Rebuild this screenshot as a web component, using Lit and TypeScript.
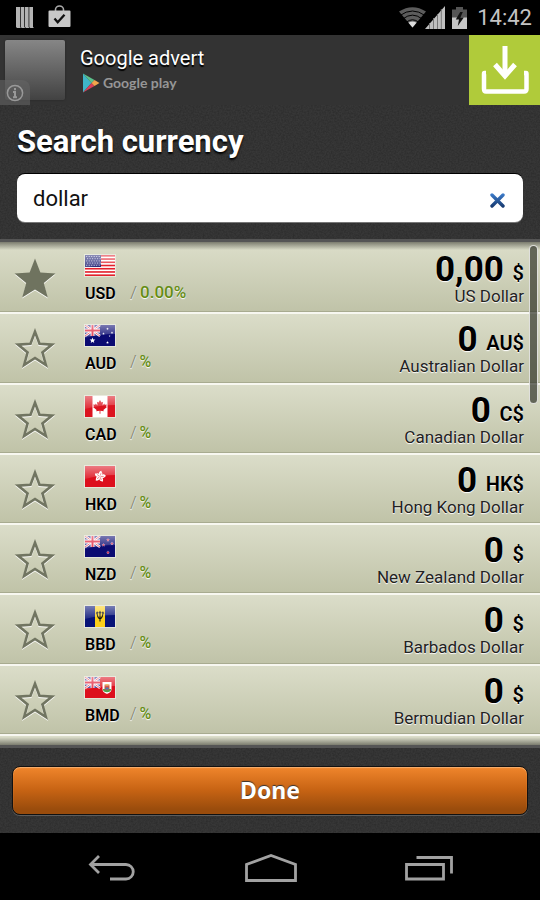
import { LitElement, html, svg, css } from "lit";
import { customElement, property } from "lit/decorators.js";

interface Currency {
  code: string;
  name: string;
  symbol: string;
  amount: string;
  change: string;
  favourite?: boolean;
}

const currencies: Currency[] = [
  { code: "USD", name: "US Dollar", symbol: "$", amount: "0,00", change: "0.00%", favourite: true },
  { code: "AUD", name: "Australian Dollar", symbol: "AU$", amount: "0", change: "%" },
  { code: "CAD", name: "Canadian Dollar", symbol: "C$", amount: "0", change: "%" },
  { code: "HKD", name: "Hong Kong Dollar", symbol: "HK$", amount: "0", change: "%" },
  { code: "NZD", name: "New Zealand Dollar", symbol: "$", amount: "0", change: "%" },
  { code: "BBD", name: "Barbados Dollar", symbol: "$", amount: "0", change: "%" },
  { code: "BMD", name: "Bermudian Dollar", symbol: "$", amount: "0", change: "%" },
];

const unionJack = (ground: string) => svg`
  <rect width="15" height="11" fill=${ground}/>
  <path d="M0 0L15 11M15 0L0 11" stroke="#fff" stroke-width="2.4"/>
  <path d="M0 0L15 11M15 0L0 11" stroke="#e2354a" stroke-width="0.9"/>
  <path d="M7.5 0V11M0 5.5H15" stroke="#fff" stroke-width="3.8"/>
  <path d="M7.5 0V11M0 5.5H15" stroke="#e0203a" stroke-width="2"/>`;

const spark = (x: number, y: number, r: number, fill: string) => {
  const pts: string[] = [];
  for (let i = 0; i < 10; i++) {
    const a = (Math.PI * i) / 5 - Math.PI / 2;
    const d = i % 2 ? r * 0.45 : r;
    pts.push(`${(x + Math.cos(a) * d).toFixed(2)},${(y + Math.sin(a) * d).toFixed(2)}`);
  }
  return svg`<polygon points=${pts.join(" ")} fill=${fill}/>`;
};

const flags: Record<string, () => unknown> = {
  USD: () => svg`
    <rect width="30" height="21" fill="#fff"/>
    ${[0, 1, 2, 3, 4, 5, 6].map((i) => svg`<rect y=${i * 3.23} width="30" height="1.62" fill="#e3202c"/>`)}
    <rect width="16" height="12" fill="#2d2f7c"/>
    ${[0, 1, 2, 3, 4].map((r) =>
      [0, 1, 2, 3, 4, 5].map(
        (c) => svg`<rect x=${1.2 + c * 2.5 + (r % 2) * 0.9} y=${1 + r * 2.2} width="1" height="1" fill="#c3c5e4"/>`,
      ),
    )}`,
  AUD: () => svg`
    <rect width="30" height="21" fill="#0b0b72"/>${unionJack("#30308c")}
    ${spark(7.5, 15.5, 3, "#fff")}${spark(22.5, 3.8, 1.3, "#fff")}${spark(18.5, 8.6, 1.3, "#fff")}
    ${spark(27, 7.6, 1.3, "#fff")}${spark(24.6, 11, 0.9, "#fff")}${spark(22.5, 17.5, 1.4, "#fff")}`,
  CAD: () => svg`
    <rect width="30" height="21" fill="#fff"/>
    <path d="M0 0H7.5V21H0zM22.5 0H30V21H22.500z" fill="#dc1420"/>
    <path d="M15 4l1.500 2.600 1.500-.8-.5 3.700 1.900-1.900.4 1.100 2-.3-.7 2 .9.600-3.600 2.900.4 1.300-3.400-.4v2.900h-.8v-2.900l-3.400.4.4-1.300L8 11l.9-.6-.7-2 2 .3.4-1.100 1.900 1.900-.5-3.700 1.500.8z" fill="#dc1420"/>`,
  HKD: () => svg`
    <rect width="30" height="21" fill="#dd0f1d"/>
    ${[0, 72, 144, 216, 288].map(
      (a) => svg`<path transform="rotate(${a + 12} 15 10.500)" d="M15 10.500c-2.600-1.600-2.300-5 .3-6 -.4 1.200 2 1.700 1.500 3.400 -.3 1.200-1.400 1.600-1.800 2.600z" fill="#fff"/>
        <path transform="rotate(${a + 12} 15 10.500)" d="M15 9.500l.3-2.700" stroke="#dd0f1d" stroke-width="0.5"/>`,
    )}`,
  NZD: () => svg`
    <rect width="30" height="21" fill="#0b0b72"/>${unionJack("#30308c")}
    ${[[23, 4], [18.5, 9], [27, 7.6], [23, 16.5]].map(
      ([x, y]) => svg`${spark(x, y, 2, "#b9b9dc")}${spark(x, y, 1.4, "#e02040")}`,
    )}`,
  BBD: () => svg`
    <rect width="30" height="21" fill="#071377"/>
    <rect x="10" width="10" height="21" fill="#fbcf1c"/>
    <path d="M15 6V15.500M11.800 6.500C12.600 9 12.400 12.500 15 12.500C17.600 12.500 17.400 9 18.200 6.500M11.200 7.500l1-1.400 1 1M16.900 7.100l1-1 1 1.400M14 7.200l1-1.700 1 1.700" fill="none" stroke="#111" stroke-width="1.1"/>`,
  BMD: () => svg`
    <rect width="30" height="21" fill="#dd0f1d"/>${unionJack("#3a3a94")}
    <path d="M17.500 5H26.500V12C26.500 15 24 16 22 17C20 16 17.500 15 17.500 12z" fill="#fff"/>
    <path d="M18 13C19 16 25 16 26 13V12H18z" fill="#4da34f"/>
    <path d="M19.500 7.500h5v4.500l-2.500 1.500-2.500-1.500z" fill="#d8503c"/>
    <path d="M20.500 10.500h3v2h-3z" fill="#3f7fc0"/><path d="M20.500 7h3v1.500h-3z" fill="#e0b040"/>`,
};

const grain = css`url("data:image/svg+xml,%3Csvg xmlns='http://www.w3.org/2000/svg' width='90' height='90'%3E%3Cfilter id='n'%3E%3CfeTurbulence type='fractalNoise' baseFrequency='.6' numOctaves='2' stitchTiles='stitch'/%3E%3CfeColorMatrix values='0 0 0 0 0 0 0 0 0 0 0 0 0 0 0 .9 0 0 0 -.28'/%3E%3C/filter%3E%3Crect width='90' height='90' filter='url(%23n)' opacity='.4'/%3E%3C/svg%3E")`;

@customElement("currency-row")
export class CurrencyRow extends LitElement {
  @property({ attribute: false }) item!: Currency;

  static styles = css`
    :host {
      display: flex;
      align-items: flex-start;
      box-sizing: border-box;
      height: 100%;
      padding: 11px 16px 0 14px;
      color: #000;
      text-shadow: 0 1px 1px #fff;
    }
    .star {
      display: block;
      width: 42px;
      height: 42px;
      margin: 3px 29px 0 0;
      padding: 0;
      border: 0;
      background: none;
    }
    .star svg {
      display: block;
      filter: drop-shadow(0 1px 0 rgba(255, 255, 255, 0.9));
    }
    .ident {
      flex: 1;
    }
    .flag {
      display: block;
      width: 30px;
      height: 21px;
      box-shadow: 0 0 0 1px rgba(255, 255, 255, 0.45);
    }
    .line {
      display: flex;
      align-items: flex-end;
      margin-top: 6px;
    }
    .code {
      width: 45px;
      font-size: 16px;
      line-height: 20px;
      font-weight: 600;
    }
    .change {
      padding-bottom: 2px;
      font-size: 16px;
      line-height: 20px;
      font-weight: 500;
      color: #648c14;
    }
    .known {
      font-size: 17px;
    }
    .slash {
      margin-right: 3px;
      font-weight: 400;
      color: #8b8e78;
    }
    .value {
      text-align: right;
    }
    .amount {
      display: block;
      font-size: 35px;
      line-height: 30px;
      font-weight: 700;
    }
    .symbol {
      font-size: 20px;
      line-height: 20px;
      font-weight: 600;
      vertical-align: 1px;
    }
    .name {
      display: block;
      font-size: 17px;
      line-height: 22px;
      color: #222;
    }
  `;

  render() {
    const c = this.item;
    return html`
      <button class="star" aria-label="Favourite ${c.code}" aria-pressed=${c.favourite ? "true" : "false"}>
        <svg width="42" height="42" viewBox="0 0 42 42">
          ${c.favourite
            ? svg`<path d="M21 .5L26.400 14.600L41.500 15.500L29.800 24.900L33.800 39.500L21 31.500L8.200 39.500L12.200 24.900L.5 15.500L15.600 14.600z" fill="#6f735f"/>`
            : svg`<path d="M21 3.700L25.500 15.800L38 16.600L28.400 24.400L31.900 37L21 30L10.100 37L13.600 24.400L4 16.600L16.500 15.800z" fill="none" stroke="#717561" stroke-width="2.6"/>`}
        </svg>
      </button>
      <div class="ident">
        <svg class="flag" viewBox="0 0 30 21" preserveAspectRatio="none" aria-hidden="true">
          <defs>
            <linearGradient id="gloss" x2="0" y2="1">
              <stop offset="0" stop-color="#fff" stop-opacity="0.45" />
              <stop offset="1" stop-color="#fff" stop-opacity="0.1" />
            </linearGradient>
          </defs>
          ${flags[c.code]()}
          <path d="M0 0H30V9Q15 9 0 13z" fill="url(#gloss)" />
        </svg>
        <div class="line">
          <span class="code">${c.code}</span>
          <span class="change ${c.change.length > 1 ? "known" : ""}"><span class="slash">/</span>${c.change}</span>
        </div>
      </div>
      <div class="value">
        <span class="amount">${c.amount} <span class="symbol">${c.symbol}</span></span>
        <span class="name">${c.name}</span>
      </div>
    `;
  }
}

@customElement("app-root")
export class AppRoot extends LitElement {
  static styles = css`
    :host {
      display: flex;
      flex-direction: column;
      min-height: 100vh;
      background: #000;
      color: #fff;
      font-family: Roboto, "Noto Sans", sans-serif;
    }
    svg {
      display: block;
    }
    .status {
      display: flex;
      align-items: center;
      height: 35px;
      padding: 0 8px 0 16px;
      gap: 7px;
    }
    .status .bag {
      margin: 0 auto 4px 7px;
    }
    .status .wifi {
      margin-right: -8px;
    }
    .clock {
      margin-left: 3px;
      font-size: 22px;
      line-height: 35px;
      color: #c4c4c4;
    }
    .ad {
      display: flex;
      height: 70px;
      background: #333;
    }
    .thumb {
      position: relative;
      width: 60px;
      height: 60px;
      margin: 5px 15px 5px 5px;
      border-radius: 2px;
      background: linear-gradient(#868686, #424242);
      box-shadow: 0 0 2px #222;
    }
    .info {
      position: absolute;
      left: -5px;
      bottom: -5px;
      display: grid;
      place-items: center;
      width: 30px;
      height: 25px;
      padding: 0;
      border: 0;
      border-radius: 0 8px 0 0;
      background: rgba(100, 100, 100, 0.6);
    }
    .copy {
      flex: 1;
      padding-top: 11px;
    }
    .headline {
      font-size: 20px;
      line-height: 24px;
      text-shadow: 0 2px 1px #000;
    }
    .store {
      display: flex;
      align-items: center;
      gap: 3px;
      margin: 3px 0 0 2px;
      font-family: Lato, sans-serif;
      font-size: 14px;
      font-weight: 700;
      line-height: 20px;
      color: #969696;
    }
    .download {
      display: grid;
      place-items: center;
      width: 71px;
      padding: 0;
      border: 0;
      background: #b0cb3a;
    }
    .search {
      padding: 17px 17px;
      border-bottom: 3px solid #555;
      background: ${grain} #373737;
    }
    h1 {
      margin: 0 0 12px;
      font-size: 31px;
      line-height: 40px;
      font-weight: 700;
      text-shadow: 0 2px 2px #000;
    }
    .field {
      display: flex;
      align-items: center;
      height: 48px;
      border-radius: 8px;
      background: #fff;
      box-shadow: 0 -1px 0 #000, 0 1px 0 #777;
    }
    .query {
      flex: 1;
      min-width: 0;
      height: 48px;
      box-sizing: border-box;
      padding: 0 16px;
      border: 0;
      outline: 0;
      background: none;
      font: 22px/28px Roboto, sans-serif;
      color: #111;
    }
    .clear {
      display: grid;
      place-items: center;
      width: 52px;
      height: 48px;
      padding: 4px 0 0;
      border: 0;
      background: none;
    }
    .results {
      position: relative;
      flex: 1;
      display: flex;
      overflow: hidden;
      background: #d3d5c0;
    }
    .results::before,
    .results::after {
      content: "";
      position: absolute;
      z-index: 1;
      left: 0;
      right: 0;
      height: 8px;
      pointer-events: none;
    }
    .results::before {
      top: 0;
      background: linear-gradient(rgba(60, 60, 50, 0.6), rgba(60, 60, 50, 0));
    }
    .results::after {
      bottom: 0;
      background: linear-gradient(rgba(60, 60, 50, 0), rgba(60, 60, 50, 0.6));
    }
    .list {
      flex: 1;
      display: grid;
      grid-template-rows: repeat(7, minmax(70px, 1fr)) 11px;
      margin: 0;
      padding: 0;
      list-style: none;
    }
    .item {
      box-sizing: border-box;
      border-top: 2px solid #f7f7f0;
      border-bottom: 1px solid #a8ab90;
      background: linear-gradient(#dbddc9, #c0c3a8);
    }
    .item:first-child {
      border-top-color: #dbddc9;
    }
    .next {
      border-bottom: 0;
      background: #dbddc9;
    }
    .thumbbar {
      position: absolute;
      z-index: 2;
      top: 3px;
      right: 2px;
      width: 7px;
      height: 157px;
      border: 1px solid rgba(255, 255, 255, 0.8);
      border-radius: 5px;
      background: rgba(50, 52, 42, 0.7);
    }
    .actions {
      padding: 18px 12px;
      border-top: 3px solid #555;
      background: ${grain} #373737;
    }
    .done {
      display: block;
      width: 100%;
      height: 49px;
      padding: 0;
      border: 1px solid #111;
      border-radius: 8px;
      background: linear-gradient(#f0862c, #c86414 48%, #9a4c0c 90%);
      box-shadow: inset 0 1px 1px #f6b070, 0 1px 0 #5c5c5c;
      font: 700 23px/47px "Noto Sans", Roboto, sans-serif;
      color: #fff;
      text-shadow: 0 -1px 1px #333;
    }
    .nav {
      display: flex;
      justify-content: space-between;
      align-items: center;
      height: 67px;
      padding: 0 86px 0 88px;
    }
    .key {
      padding: 2px 0 0;
      border: 0;
      background: none;
    }
  `;

  render() {
    return html`
      <div class="status">
        <svg width="18" height="22" viewBox="0 0 18 22" fill="#b4b4b4">
          <path d="M0 0h4v20l1 1H1L0 20zM4.700 0h3.600v20l1 1H5.700l-1-1zM9 0h3.600v20l1 1H10l-1-1zM13.300 0H17v20l1 1h-3.700l-1-1z" />
        </svg>
        <svg class="bag" width="23" height="22" viewBox="0 0 23 22">
          <path d="M7.500 6V4.500a4 3.500 0 0 1 8 0V6" fill="none" stroke="#aaa" stroke-width="1.600" />
          <path d="M1.500 5.500h20a1 1 0 0 1 1 1V21a1 1 0 0 1-1 1h-20a1 1 0 0 1-1-1V6.500a1 1 0 0 1 1-1z" fill="#c8c8c8" />
          <path d="M6.500 13.500l3.200 3.700 6.800-7.500" fill="none" stroke="#111" stroke-width="2.300" />
        </svg>
        <svg class="wifi" width="27" height="21" viewBox="0 0 27 21">
          <path d="M13.500 20.500L0 4.500Q13.500-4 27 4.500z" fill="#5c5c5c" />
          <path d="M13.500 20.500L9.500 15.800Q13.500 13 17.500 15.800z" fill="#ddd" />
          <path d="M1 8.500Q13.500-.5 26 8.500M4 11.800Q13.500 4.500 23 11.800M7 15.500Q13.500 10 20 15.500" fill="none" stroke="#000" stroke-width="1" />
        </svg>
        <svg width="20" height="23" viewBox="0 0 20 23">
          <path d="M20 0V23H0z" fill="#c0c0c0" />
          <path d="M4.500 17V23M8.500 12V23M12.500 8V23M16.300 3V23" stroke="#777" stroke-width="1" />
        </svg>
        <svg width="15" height="22" viewBox="0 0 15 22">
          <path d="M4 0h7v2.500h4V11H0V2.500h4z" fill="#555" />
          <path d="M0 10.500h15V22H0z" fill="#c6c6c6" />
          <path d="M8.200 5L3.800 12.500H7L5.800 19L11.800 10.500H8.400L10.800 5z" fill="#111" />
        </svg>
        <span class="clock">14:42</span>
      </div>

      <section class="ad">
        <div class="thumb">
          <button class="info" aria-label="About this advert">
            <svg width="18" height="18" viewBox="0 0 18 18">
              <circle cx="9" cy="9" r="7.600" fill="none" stroke="#999" stroke-width="1.500" />
              <path d="M9 4v2.200M7 8h2v5M7 13.200h4" fill="none" stroke="#999" stroke-width="2" />
            </svg>
          </button>
        </div>
        <div class="copy">
          <div class="headline">Google advert</div>
          <div class="store">
            <svg width="18" height="20" viewBox="0 0 18 20">
              <path d="M1 0.500L9.500 10L1 19.500z" fill="#3fb6c9" />
              <path d="M1 .5L12.500 7L9.500 10z" fill="#5cc28c" />
              <path d="M1 19.500L12.500 13L9.500 10z" fill="#d8405a" />
              <path d="M12.500 7L17.500 10L12.500 13L9.500 10z" fill="#f2a64c" />
            </svg>
            <span>Google play</span>
          </div>
        </div>
        <button class="download" aria-label="Download">
          <svg width="48" height="48" viewBox="0 0 48 48" fill="none" stroke="#fff">
            <path d="M24 0V29" stroke-width="5" />
            <path d="M14 18.500L24 30L34 18.500" stroke-width="5" />
            <path d="M5 27H3.500Q3 27 3 28V43Q3 45.500 5 45.500H43Q45.500 45.500 45.500 43V28Q45.500 27 45 27H43" stroke-width="4.500" />
          </svg>
        </button>
      </section>

      <section class="search">
        <h1><label for="query">Search currency</label></h1>
        <div class="field">
          <input class="query" id="query" type="text" .value=${"dollar"} />
          <button class="clear" aria-label="Clear">
            <svg width="15" height="15" viewBox="0 0 15 15">
              <defs>
                <linearGradient id="ink" gradientUnits="userSpaceOnUse" x1="0" y1="0" x2="0" y2="15">
                  <stop offset="0" stop-color="#3f80d0" />
                  <stop offset="1" stop-color="#143468" />
                </linearGradient>
              </defs>
              <path d="M2 2L13 13M13 2L2 13" stroke="url(#ink)" stroke-width="3.400" stroke-linecap="round" />
            </svg>
          </button>
        </div>
      </section>

      <section class="results">
        <ul class="list">
          ${currencies.map((c) => html`<li class="item"><currency-row .item=${c}></currency-row></li>`)}
          <li class="item next" aria-hidden="true"></li>
        </ul>
        <div class="thumbbar"></div>
      </section>

      <section class="actions">
        <button class="done">Done</button>
      </section>

      <nav class="nav">
        <button class="key" aria-label="Back">
          <svg width="48" height="26" viewBox="0 0 48 26" fill="none" stroke="#a2a2a2" stroke-width="2.800">
            <path d="M2.500 9.500H38a7.200 7.200 0 0 1 0 14.500H22M11 1L2.500 9.500L11 18" />
          </svg>
        </button>
        <button class="key" aria-label="Home">
          <svg width="52" height="28" viewBox="0 0 52 28" fill="none" stroke="#a2a2a2" stroke-width="2.800">
            <path d="M1.500 26.500V10.500L26 1.500L50.500 10.500V26.500z" />
          </svg>
        </button>
        <button class="key" aria-label="Recent apps">
          <svg width="49" height="26" viewBox="0 0 49 26" fill="none" stroke="#a2a2a2" stroke-width="2.800">
            <path d="M1.500 9.500H38.500V24H1.500zM11.500 2.500H46.500V18.500" />
          </svg>
        </button>
      </nav>
    `;
  }
}
